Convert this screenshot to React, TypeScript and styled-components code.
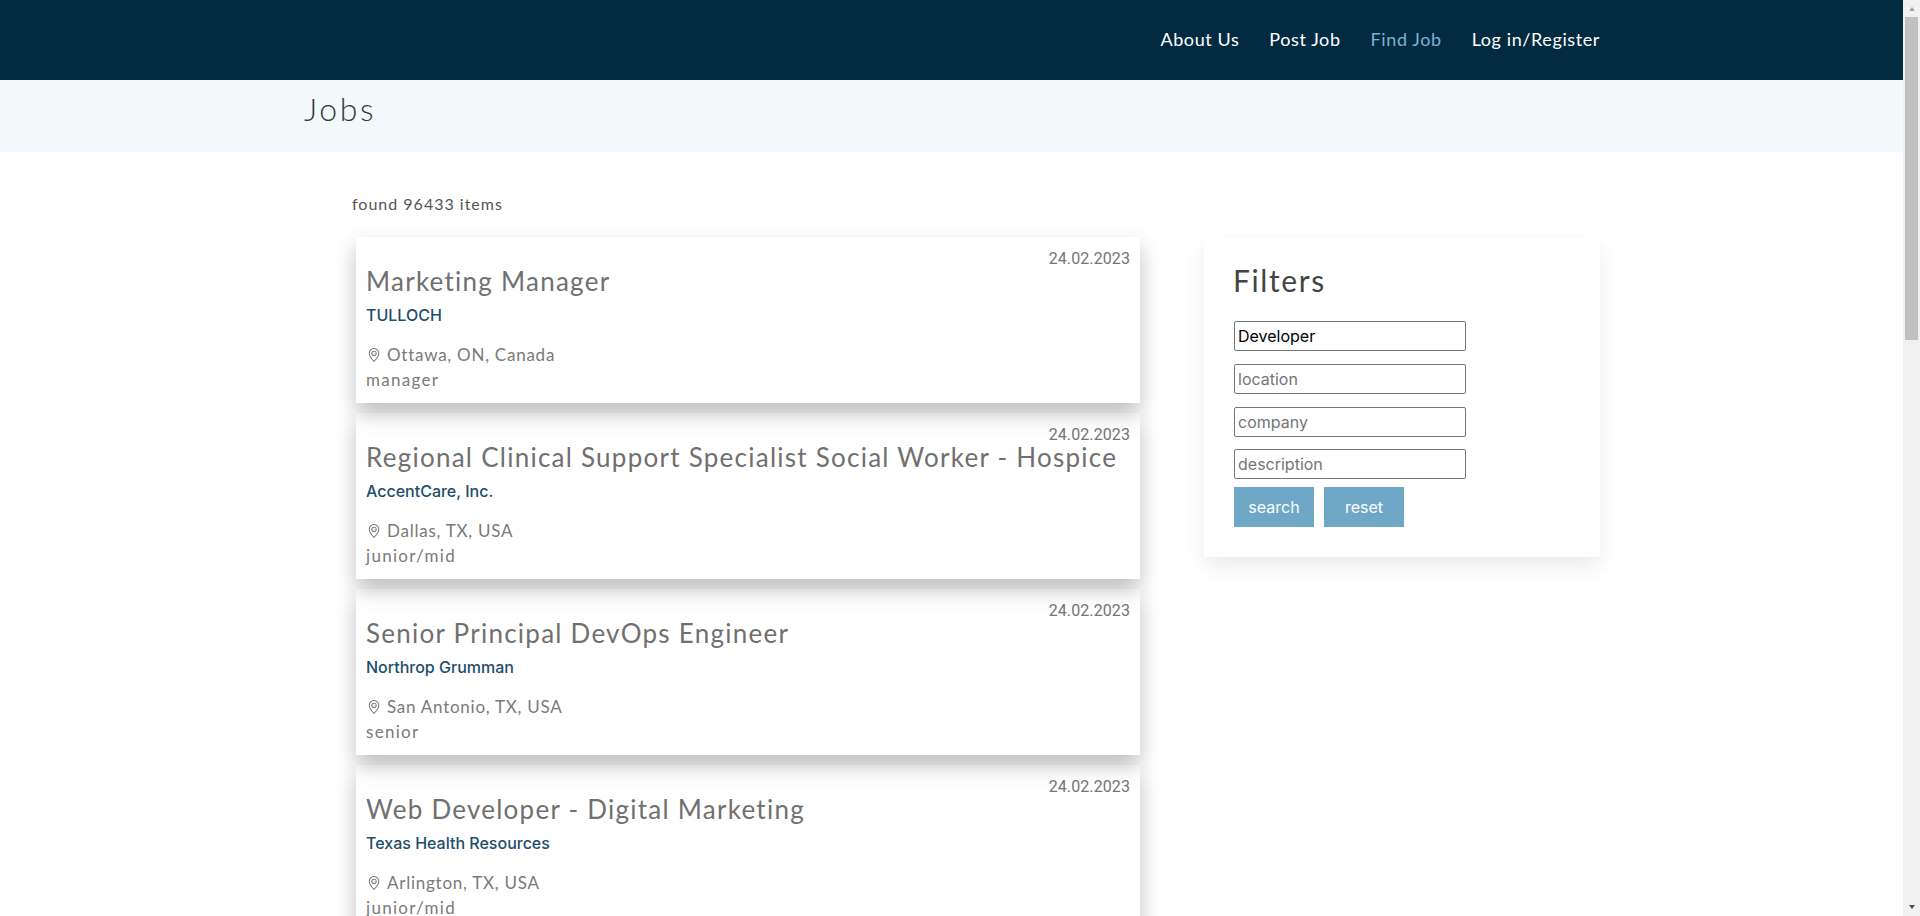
import { createGlobalStyle, styled } from "styled-components";

const headingFont = `"Lato", "Noto Sans", sans-serif`;

const GlobalStyle = createGlobalStyle`
  html {
    overflow: hidden;
  }

  body {
    margin: 0;
    background: #fff;
    font-family: ${headingFont};
    color: #212529;
  }
`;

const Viewport = styled.div`
  display: flex;
  height: 100vh;
  overflow: hidden;
`;

const Page = styled.div`
  flex: 1;
  min-width: 0;
`;

const ScrollBar = styled.div`
  width: 17px;
  display: flex;
  flex-direction: column;
  align-items: center;
  background: #f1f1f1;
`;

const ScrollArrow = styled.div<{ $down?: boolean }>`
  width: 0;
  height: 0;
  border-left: 3.5px solid transparent;
  border-right: 3.5px solid transparent;
  ${(p) =>
    p.$down
      ? "margin: auto 0 7px; border-top: 4px solid #505050;"
      : "margin: 7px 0 6px; border-bottom: 4px solid #a3a3a3;"}
`;

const ScrollThumb = styled.div`
  width: 13px;
  height: 323px;
  background: #c1c1c1;
`;

const Container = styled.div`
  width: 1296px;
  margin-left: 304px;
`;

const Navbar = styled.nav`
  height: 80px;
  background: #022b42;
`;

const NavLinks = styled(Container)`
  height: 100%;
  box-sizing: border-box;
  padding-bottom: 3px;
  display: flex;
  justify-content: flex-end;
  align-items: center;
  gap: 30px;
`;

const NavLink = styled.a<{ $active?: boolean }>`
  font-size: 18px;
  letter-spacing: 0.6px;
  color: ${(p) => (p.$active ? "#78b2d3" : "#fff")};
`;

const TitleBar = styled.div`
  height: 72px;
  background: #f3f8fb;
`;

const PageTitle = styled.h1`
  margin: 0;
  padding-top: 10px;
  font-size: 32px;
  line-height: 38px;
  font-weight: 300;
  letter-spacing: 2.6px;
  color: #343a40;
`;

const Content = styled(Container)`
  display: flex;
  align-items: flex-start;
`;

const Results = styled.section`
  margin-left: 48px;
  width: 788px;
`;

const Found = styled.p`
  margin: 42px 0 23px;
  font-size: 16px;
  line-height: 20px;
  letter-spacing: 1px;
  color: #555;
`;

const JobList = styled.div`
  margin-left: 4px;
  display: flex;
  flex-direction: column;
  gap: 10px;
`;

// earlier cards sit on top so their shadow falls across the next card
const Card = styled.article<{ $stack: number }>`
  position: relative;
  z-index: ${(p) => p.$stack};
  width: 784px;
  height: 166px;
  padding: 0 10px;
  box-sizing: border-box;
  background: #fff;
  box-shadow: 0 10px 20px rgba(0, 0, 0, 0.25);
`;

const DateLabel = styled.span`
  position: absolute;
  top: 12px;
  right: 10px;
  font-family: "Roboto", sans-serif;
  font-size: 16px;
  letter-spacing: 0.1px;
  color: #757575;
`;

const JobTitle = styled.h2`
  margin: 0;
  padding-top: 27px;
  font-size: 26px;
  line-height: 34px;
  font-weight: 400;
  letter-spacing: 1.25px;
  color: #707070;
`;

const Company = styled.div`
  margin-top: 7px;
  font-family: "Inter", sans-serif;
  font-size: 16px;
  line-height: 20px;
  font-weight: 500;
  color: #1d4e6b;
`;

const Location = styled.div`
  margin-top: 18px;
  margin-left: 1px;
  display: flex;
  align-items: center;
  gap: 6px;
  font-size: 17px;
  line-height: 24px;
  letter-spacing: 0.75px;
  color: #7a7a7a;
`;

const Level = styled.div`
  font-size: 17px;
  line-height: 25px;
  letter-spacing: 1.3px;
  color: #7a7a7a;
`;

const Sidebar = styled.aside`
  margin: 85px 0 0 64px;
  width: 396px;
  height: 320px;
  padding: 25px 30px 0;
  box-sizing: border-box;
  background: #fff;
  box-shadow: 0 10px 20px rgba(0, 0, 0, 0.08);
`;

const FiltersTitle = styled.h3`
  margin: 0 0 23px -1px;
  font-size: 30px;
  line-height: 36px;
  font-weight: 400;
  letter-spacing: 1.6px;
  color: #444;
`;

const FilterForm = styled.form`
  display: flex;
  flex-direction: column;
  align-items: flex-start;
  gap: 13px;
`;

const FilterInput = styled.input<{ $tight?: boolean }>`
  width: 232px;
  height: 30px;
  margin-top: ${(p) => (p.$tight ? "-1px" : "0")};
  padding: 0 3px;
  box-sizing: border-box;
  border: 1px solid #767676;
  border-radius: 2px;
  font-family: "Inter", sans-serif;
  font-size: 16px;
  color: #000;

  &::placeholder {
    color: #757575;
  }
`;

const Buttons = styled.div`
  margin-top: -5px;
  display: flex;
  gap: 10px;
`;

const FilterButton = styled.button`
  width: 80px;
  height: 40px;
  padding: 0;
  border: 0;
  background: #6fa8c7;
  font-family: "Inter", sans-serif;
  font-size: 16px;
  color: #fff;
`;

const PinIcon = () => (
  <svg width="14" height="14" viewBox="0 0 16 16" fill="#6c6c6c">
    <path d="M12.166 8.94c-.524 1.062-1.234 2.12-1.96 3.07A31.493 31.493 0 0 1 8 14.58a31.481 31.481 0 0 1-2.206-2.57c-.726-.95-1.436-2.008-1.96-3.07C3.304 7.867 3 6.862 3 6a5 5 0 0 1 10 0c0 .862-.305 1.867-.834 2.94zM8 16s6-5.686 6-10A6 6 0 0 0 2 6c0 4.314 6 10 6 10z" />
    <path d="M8 8a2 2 0 1 1 0-4 2 2 0 0 1 0 4zm0 1a3 3 0 1 0 0-6 3 3 0 0 0 0 6z" />
  </svg>
);

const jobs = [
  { title: "Marketing Manager", company: "TULLOCH", location: "Ottawa, ON, Canada", level: "manager" },
  { title: "Regional Clinical Support Specialist Social Worker - Hospice", company: "AccentCare, Inc.", location: "Dallas, TX, USA", level: "junior/mid" },
  { title: "Senior Principal DevOps Engineer", company: "Northrop Grumman", location: "San Antonio, TX, USA", level: "senior" },
  { title: "Web Developer - Digital Marketing", company: "Texas Health Resources", location: "Arlington, TX, USA", level: "junior/mid" },
];

export default function App() {
  return (
    <Viewport>
      <GlobalStyle />
      <Page>
        <Navbar>
          <NavLinks>
            <NavLink>About Us</NavLink>
            <NavLink>Post Job</NavLink>
            <NavLink $active>Find Job</NavLink>
            <NavLink>Log in/Register</NavLink>
          </NavLinks>
        </Navbar>
        <TitleBar>
          <Container>
            <PageTitle>Jobs</PageTitle>
          </Container>
        </TitleBar>
        <Content>
          <Results>
            <Found>found 96433 items</Found>
            <JobList>
              {jobs.map((job, index) => (
                <Card key={job.title} $stack={jobs.length - index}>
                  <DateLabel>24.02.2023</DateLabel>
                  <JobTitle>{job.title}</JobTitle>
                  <Company>{job.company}</Company>
                  <Location>
                    <PinIcon />
                    {job.location}
                  </Location>
                  <Level>{job.level}</Level>
                </Card>
              ))}
            </JobList>
          </Results>
          <Sidebar>
            <FiltersTitle>Filters</FiltersTitle>
            <FilterForm>
              <FilterInput defaultValue="Developer" placeholder="title" />
              <FilterInput placeholder="location" />
              <FilterInput placeholder="company" />
              <FilterInput $tight placeholder="description" />
              <Buttons>
                <FilterButton type="button">search</FilterButton>
                <FilterButton type="button">reset</FilterButton>
              </Buttons>
            </FilterForm>
          </Sidebar>
        </Content>
      </Page>
      <ScrollBar>
        <ScrollArrow />
        <ScrollThumb />
        <ScrollArrow $down />
      </ScrollBar>
    </Viewport>
  );
}
